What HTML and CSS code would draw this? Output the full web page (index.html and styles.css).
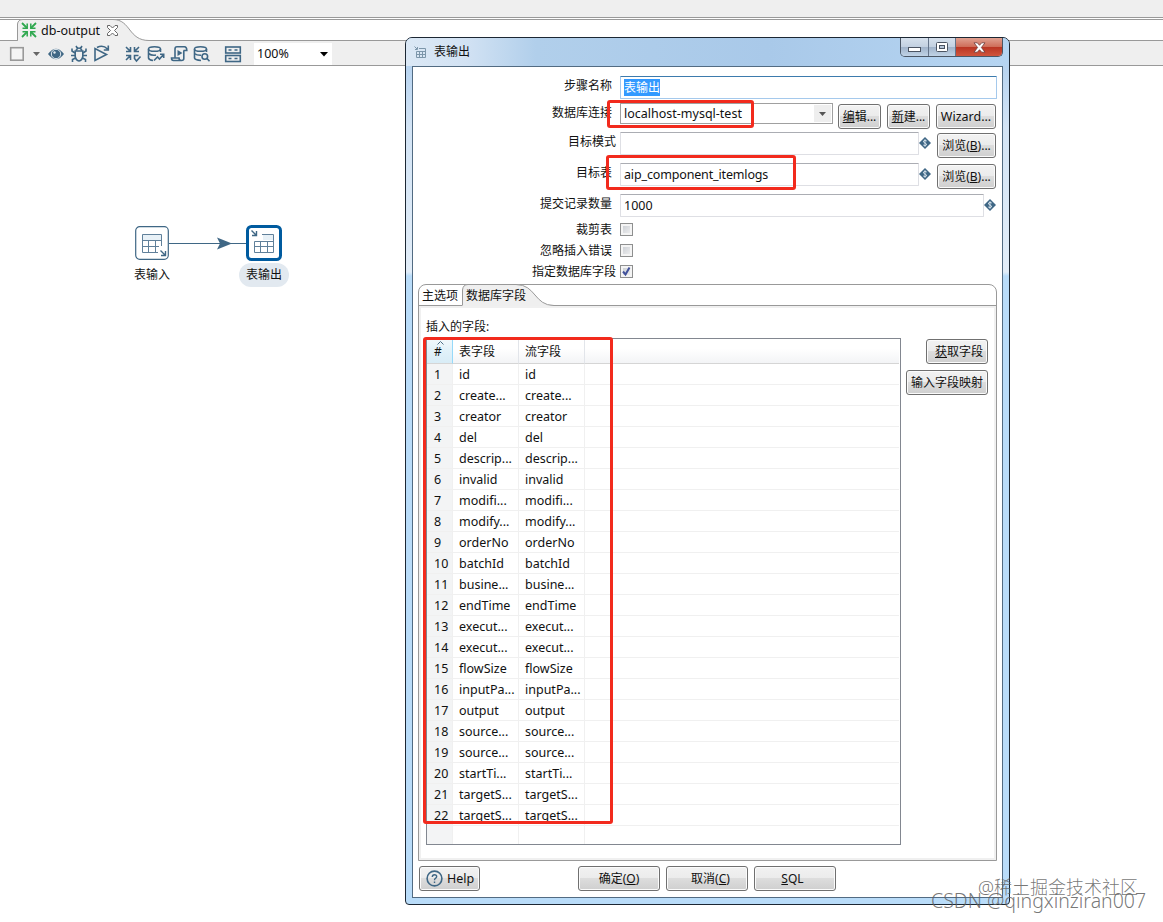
FILE: index.html
```
<!DOCTYPE html>
<html lang="zh-CN">
<head>
    <meta charset="UTF-8">
    <title>db-output</title>
    <link rel="stylesheet" href="styles.css">
</head>
<body>
    <div class="menu-strip"></div>
    <div class="tab-strip">
        <svg class="tab-shape" width="160" height="22" viewBox="0 0 160 22">
            <path d="M17.500 22 V5 Q18 .5 23 .5 H113 C131 .5 128 21.500 149 21.500 V22 Z" fill="#efefef"/>
            <path d="M0 21.500 H17.500 V5 Q18 .5 23 .5 H113 C131 .5 128 21.500 149 21.500 H160" fill="none" stroke="#999"/>
        </svg>
        <div class="tab-title">
            <svg width="16" height="16" viewBox="0 0 16 16" fill="none" stroke="#2fa84f" stroke-width="1.800">
                <path d="M1 1 L6 6 M15 1 L10 6 M1 15 L6 10 M15 15 L10 10"/>
                <path d="M1.500 6.200 H6.200 V1.500 M14.500 6.200 H9.800 V1.500 M1.500 9.800 H6.200 V14.500 M14.500 9.800 H9.800 V14.500" stroke-width="1.500"/>
            </svg>
            <span>db-output</span>
            <svg class="tab-close" width="11" height="11" viewBox="0 0 11 11" fill="#fff" stroke="#666">
                <path d="M.5 .5 H3 L5.500 3 L8 .5 H10.500 V2.500 L7.500 5.500 L10.500 8.500 V10.500 H8 L5.500 8 L3 10.500 H.5 V8.500 L3.500 5.500 L.5 2.500 Z"/>
            </svg>
        </div>
    </div>
    <div class="toolbar">
        <svg class="tools" width="250" height="24" viewBox="0 0 250 24" fill="none" stroke="#3f6785" stroke-width="1.600">
            <!-- stop + dropdown -->
            <rect x="10.700" y="6.700" width="12.500" height="12.500" stroke="#999" fill="#f4f4f4"/>
            <path d="M33 11 H40 L36.500 15 Z" fill="#666" stroke="none"/>
            <!-- preview -->
            <path d="M48 13 Q56 2.500 64 13 Q56 23.500 48 13 Z" fill="#3f6785" stroke="none"/>
            <circle cx="56" cy="13" r="4.700" fill="#3f6785" stroke="#e4ebf0" stroke-width="1"/>
            <circle cx="54.500" cy="11.500" r="1.200" fill="#dfe8ee" stroke="none"/>
            <!-- debug -->
            <path d="M75.200 10 H82.800 V15.500 Q82 19.500 79 20 Q76 19.500 75.200 15.500 Z"/>
            <path d="M76 9.500 Q79 4.500 82 9.500 M76 5 L77.500 7.500 M82 5 L80.500 7.500 M75 12 L72 10 V7.500 M83 12 L86 10 V7.500 M75 14.500 H71 M83 14.500 H87 M75.500 17 L72.500 18.500 V21 M82.500 17 L85.500 18.500 V21"/>
            <!-- replay -->
            <path d="M95 7.500 V19.500 L106.500 13.500 Z"/>
            <path d="M97 6.500 Q103 3.500 107.500 8 M108.300 4.500 V9 H103.800"/>
            <!-- verify -->
            <path d="M126 6 L130.500 10.500 M139 6 L134.500 10.500 M126 19 L130.500 14.500 M126 10.500 H130.500 V6 M139 10.500 H134.500 V6 M126 14.500 H130.500 V19 M134.500 18 V14.500 H138.500 M134.500 17.500 L136.500 20 L140.500 15.500"/>
            <!-- impact -->
            <ellipse cx="154.500" cy="8" rx="6" ry="2.300"/>
            <path d="M148.500 8 V17 Q149 19 153 19.500 M160.500 8 V11 M148.500 12.500 Q152 15 156 14 M154 19.500 L157.500 16 L159.500 18 L163.500 13.500 M160 13.200 H163.700 V17"/>
            <!-- sql script -->
            <path d="M175 16.500 V8 Q175 5.800 177 5.800 H184.500 Q186.800 5.800 186.800 9.500 H183.500 M183.800 9.500 V17.500 Q183.800 19.500 181.500 19.500 H173.500 Q171.500 19.500 171.500 17 H179 Q179 19.500 181.500 19.500"/>
            <path d="M177.500 9 L182.500 12 L177.500 15 Z" fill="#3f6785" stroke="none"/>
            <!-- explore db -->
            <ellipse cx="200.500" cy="8" rx="6" ry="2.300"/>
            <path d="M194.500 8 V17 Q195 19 201 19.500 M206.500 8 V11 M194.500 12.500 Q197 14.500 201 14.300"/>
            <circle cx="204.800" cy="15.500" r="2.800"/>
            <path d="M207 17.500 L209.500 20.200"/>
            <!-- results pane -->
            <rect x="225.700" y="6" width="14.600" height="6"/>
            <rect x="225.700" y="14.500" width="14.600" height="6"/>
            <path d="M228.500 9 H231.500 M234.500 9 H237.500 M228.500 17.500 H231.500 M234.500 17.500 H237.500"/>
        </svg>
        <div class="zoom-box">
            <span>100%</span>
            <svg width="8" height="5" viewBox="0 0 8 5"><path d="M0 0 H8 L4 4.500 Z"/></svg>
        </div>
    </div>

    <div class="canvas">
        <svg class="hop" width="78" height="14" viewBox="0 0 78 14">
            <path d="M0 7.500 H78" stroke="#3f6785"/>
            <path d="M48 1.500 L63 7.500 L48 13.500 L51 7.500 Z" fill="#3f6785"/>
        </svg>
        <div class="step step-input">
            <svg width="34" height="34" viewBox="0 0 34 34" fill="none">
                <rect x=".7" y=".7" width="32.600" height="32.600" rx="4" fill="#fff" stroke="#3f6785" stroke-width="1.200"/>
                <path d="M8 9 H26 V14 H8 Z" fill="#e8f1f7"/>
                <path d="M23 26.500 H7.500 V8.500 H26.500 V20 M7.500 14.500 H26.500 M7.500 20.500 H24 M13.500 14.500 V26.500 M20.500 14.500 V26.500" stroke="#60809a"/>
                <path d="M25.500 24.500 L30 29 M30.500 25 V29.500 H26" stroke="#3f6785" stroke-width="1.400"/>
            </svg>
            <span class="step-name">表输入</span>
        </div>
        <div class="step step-output">
            <svg width="36" height="36" viewBox="0 0 36 36" fill="none">
                <rect x="1.500" y="1.500" width="33" height="33" rx="4" fill="#fff" stroke="#005b9f" stroke-width="3"/>
                <path d="M17 10 H27 V15 H17 Z" fill="#e8f1f7"/>
                <path d="M16 9.500 H27.500 V27.500 H8.500 V16.500 H27.500 M8.500 21.500 H27.500 M14.500 16.500 V27.500 M21.500 16.500 V27.500" stroke="#60809a"/>
                <path d="M5.500 5.500 L10 10 M10.500 6 V10.500 H6" stroke="#3f6785" stroke-width="1.400"/>
            </svg>
            <span class="step-name selected">表输出</span>
        </div>
    </div>

    <div class="dialog">
        <div class="title-bar">
            <svg width="13" height="13" viewBox="0 0 13 13" fill="none" stroke="#7c96aa">
                <path d="M5 2.500 H11.500 V11.500 H2.500 V5.500 H11.500 M2.500 8.500 H11.500 M5.500 5.500 V11.500 M8.500 5.500 V11.500"/>
                <path d="M.5 .5 L3 3 M3.500 1 V3.500 H1"/>
            </svg>
            <span class="title">表输出</span>
            <div class="window-buttons">
                <div class="win-btn win-min">
                    <svg width="13" height="5" viewBox="0 0 13 5"><rect x=".5" y=".5" width="12" height="4" fill="#fff" stroke="#4b5462"/></svg>
                </div>
                <div class="win-btn win-max">
                    <svg width="12" height="10" viewBox="0 0 12 10"><rect x=".5" y=".5" width="11" height="9" rx="1" fill="#fff" stroke="#4b5462"/><rect x="3.500" y="3.500" width="5" height="3" fill="#b7c6d8" stroke="#4b5462"/></svg>
                </div>
                <div class="win-btn win-close">
                    <svg width="13" height="11" viewBox="0 0 13 11"><path d="M1 .8 H4.300 L6.500 3.300 L8.700 .8 H12 L8.400 5.500 L12 10.200 H8.700 L6.500 7.700 L4.300 10.200 H1 L4.600 5.500 Z" fill="#fff" stroke="#6b3a3a" stroke-width=".8"/></svg>
                </div>
            </div>
        </div>

        <div class="dialog-body">
            <div class="form">
                <div class="row row-name">
                    <label>步骤名称</label>
                    <div class="field focused"><span class="selection">表输出</span></div>
                </div>
                <div class="row row-connection">
                    <label>数据库连接</label>
                    <div class="combo">
                        <span>localhost-mysql-test</span>
                        <div class="combo-arrow"><svg width="7" height="4" viewBox="0 0 7 4"><path d="M0 0 H7 L3.500 4 Z" fill="#555"/></svg></div>
                    </div>
                    <div class="btn btn-small"><u>编</u>辑...</div>
                    <div class="btn btn-small"><u>新</u>建...</div>
                    <div class="btn btn-wizard">Wizard...</div>
                </div>
                <div class="row row-target">
                    <label class="wide">目标模式</label>
                    <div class="field"></div>
                    <svg class="var" width="12" height="12" viewBox="0 0 12 12"><path d="M6 0 L12 6 L6 12 L0 6 Z" fill="#3f6785"/><path d="M7.800 4 Q6 2.800 4.500 4 Q4.200 5.500 6 6 Q7.800 6.500 7.500 8 Q6 9.200 4.200 8 M6 2.200 V9.800" fill="none" stroke="#dce8f0" stroke-width=".9"/></svg>
                    <div class="btn btn-browse">浏览(<u>B</u>)...</div>
                </div>
                <div class="row row-target">
                    <label>目标表</label>
                    <div class="field table-name">aip_component_itemlogs</div>
                    <svg class="var" width="12" height="12" viewBox="0 0 12 12"><path d="M6 0 L12 6 L6 12 L0 6 Z" fill="#3f6785"/><path d="M7.800 4 Q6 2.800 4.500 4 Q4.200 5.500 6 6 Q7.800 6.500 7.500 8 Q6 9.200 4.200 8 M6 2.200 V9.800" fill="none" stroke="#dce8f0" stroke-width=".9"/></svg>
                    <div class="btn btn-browse">浏览(<u>B</u>)...</div>
                </div>
                <div class="row row-commit">
                    <label>提交记录数量</label>
                    <div class="field">1000</div>
                    <svg class="var" width="12" height="12" viewBox="0 0 12 12"><path d="M6 0 L12 6 L6 12 L0 6 Z" fill="#3f6785"/><path d="M7.800 4 Q6 2.800 4.500 4 Q4.200 5.500 6 6 Q7.800 6.500 7.500 8 Q6 9.200 4.200 8 M6 2.200 V9.800" fill="none" stroke="#dce8f0" stroke-width=".9"/></svg>
                </div>
                <div class="row row-check">
                    <label>裁剪表</label>
                    <div class="check"></div>
                </div>
                <div class="row row-check">
                    <label>忽略插入错误</label>
                    <div class="check"></div>
                </div>
                <div class="row row-check">
                    <label class="wide">指定数据库字段</label>
                    <div class="check"><svg width="11" height="11" viewBox="0 0 11 11"><path d="M2 5.500 L4.500 8.500 L8.500 1.500" fill="none" stroke="#41519b" stroke-width="2"/></svg></div>
                </div>
            </div>

            <div class="folder">
                <div class="folder-tabs">
                    <svg class="folder-shape" width="140" height="22" viewBox="0 0 140 22">
                        <path d="M44.500 22 V6 Q45 .5 50 .5 H98 C118 .5 116 21.500 136 21.500 V22 Z" fill="#efefef"/>
                        <path d="M44.500 21 V6 Q45 .5 50 .5 H98 C118 .5 116 21.500 136 21.500 H140" fill="none" stroke="#999"/>
                    </svg>
                    <span class="folder-tab">主选项</span>
                    <span class="folder-tab">数据库字段</span>
                </div>
                <div class="folder-body">
                    <div class="caption">插入的字段:</div>
                    <div class="fields">
                        <div class="grid-box">
                            <table>
                                <thead>
                                    <tr><th class="num"><svg class="sort" width="7" height="4" viewBox="0 0 7 4"><path d="M.5 3.500 L3.500 .5 L6.500 3.500" fill="none" stroke="#4e6f86"/></svg>#</th><th class="name">表字段</th><th class="name">流字段</th><th></th></tr>
                                </thead>
                                <tbody>
                                    <tr><td>1</td><td>id</td><td>id</td><td></td></tr>
                                    <tr><td>2</td><td>create...</td><td>create...</td><td></td></tr>
                                    <tr><td>3</td><td>creator</td><td>creator</td><td></td></tr>
                                    <tr><td>4</td><td>del</td><td>del</td><td></td></tr>
                                    <tr><td>5</td><td>descrip...</td><td>descrip...</td><td></td></tr>
                                    <tr><td>6</td><td>invalid</td><td>invalid</td><td></td></tr>
                                    <tr><td>7</td><td>modifi...</td><td>modifi...</td><td></td></tr>
                                    <tr><td>8</td><td>modify...</td><td>modify...</td><td></td></tr>
                                    <tr><td>9</td><td>orderNo</td><td>orderNo</td><td></td></tr>
                                    <tr><td>10</td><td>batchId</td><td>batchId</td><td></td></tr>
                                    <tr><td>11</td><td>busine...</td><td>busine...</td><td></td></tr>
                                    <tr><td>12</td><td>endTime</td><td>endTime</td><td></td></tr>
                                    <tr><td>13</td><td>execut...</td><td>execut...</td><td></td></tr>
                                    <tr><td>14</td><td>execut...</td><td>execut...</td><td></td></tr>
                                    <tr><td>15</td><td>flowSize</td><td>flowSize</td><td></td></tr>
                                    <tr><td>16</td><td>inputPa...</td><td>inputPa...</td><td></td></tr>
                                    <tr><td>17</td><td>output</td><td>output</td><td></td></tr>
                                    <tr><td>18</td><td>source...</td><td>source...</td><td></td></tr>
                                    <tr><td>19</td><td>source...</td><td>source...</td><td></td></tr>
                                    <tr><td>20</td><td>startTi...</td><td>startTi...</td><td></td></tr>
                                    <tr><td>21</td><td>targetS...</td><td>targetS...</td><td></td></tr>
                                    <tr><td>22</td><td>targetS...</td><td>targetS...</td><td></td></tr>
                                    <tr><td></td><td></td><td></td><td></td></tr>
                                </tbody>
                            </table>
                        </div>
                        <div class="side-buttons">
                            <div class="btn btn-get"><u>获</u>取字段</div>
                            <div class="btn btn-map">输入字段映射</div>
                        </div>
                    </div>
                </div>
            </div>

            <div class="footer">
                <div class="btn btn-help">
                    <svg width="17" height="17" viewBox="0 0 17 17" fill="none" stroke="#3f6785" stroke-width="1.600"><circle cx="8.500" cy="8.500" r="7.400"/><path d="M6.300 7 Q6.300 4.700 8.500 4.700 Q10.700 4.700 10.700 6.600 Q10.700 7.600 9.500 8.300 Q8.500 9 8.500 10.200 M8.500 11.500 V13" stroke-width="1.400"/></svg>
                    <span>Help</span>
                </div>
                <div class="btn btn-action">确定(<u>O</u>)</div>
                <div class="btn btn-action cancel">取消(<u>C</u>)</div>
                <div class="btn btn-action sql"><u>S</u>QL</div>
            </div>
        </div>
    </div>

    <!-- highlight boxes -->
    <div class="mark mark-connection"></div>
    <div class="mark mark-table"></div>
    <div class="mark mark-fields"></div>

    <div class="watermark watermark-top">@稀土掘金技术社区</div>
    <div class="watermark watermark-bottom">CSDN @qingxinziran007</div>
</body>
</html>
```
FILE: styles.css
```
* {
    box-sizing: border-box;
}

body {
    margin: 0;
    height: 922px;
    position: relative;
    overflow: hidden;
    background-color: #fff;
    color: #111;
    font-family: "Noto Sans", "Noto Sans CJK SC", sans-serif;
    font-size: 12px;
    line-height: 18px;
    white-space: nowrap;
}

svg {
    display: block;
    flex: none;
}

/* editor */
.menu-strip {
    height: 18px;
    background-color: #efefef;
    border-bottom: 1px solid #999;
}

.tab-strip {
    height: 22px;
    position: relative;
    margin-top: 1px;
    border-top: 1px solid #999;
    border-bottom: 1px solid #999;
}

.tab-shape {
    position: absolute;
    left: 0;
    top: -1px;
}

.tab-title {
    position: relative;
    display: flex;
    align-items: center;
    height: 20px;
    padding-left: 21px;
    font-size: 12.5px;
}

.tab-title span {
    margin: 0 7px 0 4px;
    padding-top: 2px;
}

.toolbar {
    display: flex;
    height: 25px;
    background-color: #efefef;
    border-bottom: 1px solid #999;
}

.zoom-box {
    display: flex;
    align-items: center;
    justify-content: space-between;
    width: 78px;
    height: 22px;
    margin: 2px 0 0 4px;
    padding: 0 4px 0 3px;
    background-color: #fff;
    font-size: 12.5px;
}

.hop {
    position: absolute;
    left: 169px;
    top: 236px;
}

.step {
    position: absolute;
    display: flex;
    flex-direction: column;
    align-items: center;
    width: 50px;
}

.step-input {
    left: 127px;
    top: 226px;
}

.step-output {
    left: 239px;
    top: 225px;
}

.step-name {
    height: 24px;
    margin-top: 3px;
    padding: 0 7px;
    line-height: 24px;
}

.step-name.selected {
    margin-top: 2px;
    border-radius: 12px;
    background-color: #e2e9f0;
}

/* dialog window */
.dialog {
    position: absolute;
    left: 405px;
    top: 37px;
    width: 605px;
    height: 868px;
    padding: 0 6px 6px;
    border: 1px solid #1c2733;
    border-radius: 7px 7px 4px 4px;
    background: linear-gradient(to bottom, #b0cde9 0, #b8d4f0 30px, #d3e4f5 90px, #e2edf8 234px, #b9dcf9 238px, #b9dcf9 100%);
}

.title-bar {
    display: flex;
    align-items: center;
    height: 28px;
    margin: 0 -6px;
    padding: 0 6px 0 8px;
    border-radius: 6px 6px 0 0;
    background: linear-gradient(to right, #dbe8f5 0, #d2e2f3 60px, #b1cfeb 130px, #a9c9e9 60%, #b6d5f2 100%);
}

.title {
    margin-left: 7px;
}

.window-buttons {
    display: flex;
    align-self: flex-start;
    width: 103px;
    height: 19px;
    margin-left: auto;
    border: 1px solid #4a5665;
    border-top: 0;
    border-radius: 0 0 5px 5px;
    overflow: hidden;
}

.win-btn {
    display: flex;
    align-items: center;
    justify-content: center;
    border-right: 1px solid #64748a;
    background: linear-gradient(#d6e1ed 0, #c3d1e1 48%, #9fb2c9 50%, #c0d3e6 100%);
}

.win-min {
    width: 28px;
    padding-top: 4px;
}

.win-max {
    width: 27px;
}

.win-close {
    flex: 1;
    border-right: 0;
    background: linear-gradient(#e0a191 0, #cf6e5a 48%, #b93422 50%, #d0553d 100%);
}

.dialog-body {
    height: 832px;
    border: 1px solid #526b82;
    background-color: #fff;
}

.form {
    height: 218px;
    padding-top: 9px;
}

.row {
    display: flex;
    align-items: flex-start;
}

.row label {
    width: 207px;
    padding: 1px 8px 0 0;
    text-align: right;
}

.row label.wide {
    padding-right: 4px;
}

.row-name {
    height: 27px;
}

.row-connection {
    height: 29px;
}

.row-target {
    height: 31px;
}

.row-commit {
    height: 28px;
}

.row-check {
    height: 21px;
    line-height: 15px;
}

.row-check label {
    padding-top: 0;
}

.field {
    width: 299px;
    height: 23px;
    padding: 0 3px;
    border: 1px solid #dedfe4;
    border-top-color: #abadb3;
    border-radius: 1px;
    font-size: 12.5px;
    line-height: 21px;
}

.table-name {
    letter-spacing: -0.15px;
}

.row-commit .field {
    width: 364px;
}

.row .focused {
    width: 377px;
    padding-top: 2px;
    border-color: #a5c9ec;
    border-top-color: #3d7bad;
    font-size: 12px;
    line-height: 17px;
}

.selection {
    display: inline-block;
    background-color: #3399ff;
    color: #fff;
}

.combo {
    display: flex;
    justify-content: space-between;
    width: 213px;
    height: 21px;
    padding: 1px 1px 1px 3px;
    border: 1px solid #a0a0a0;
    font-size: 12.5px;
    line-height: 17px;
}

.combo-arrow {
    display: flex;
    align-items: center;
    justify-content: center;
    width: 17px;
    background-color: #eee;
}

.btn {
    height: 25px;
    border: 1px solid #707070;
    border-radius: 3px;
    box-shadow: inset 0 0 0 1px #fbfbfb;
    background: linear-gradient(#f2f2f2 0, #ebebeb 50%, #dddddd 50%, #cfcfcf 100%);
    line-height: 23px;
    text-align: center;
}

.row .btn {
    margin-top: 1px;
}

.btn-small {
    width: 43px;
    margin-left: 5px;
}

.btn-small + .btn-small {
    margin-left: 6px;
}

.btn-wizard {
    width: 60px;
    margin-left: 6px;
    font-size: 12.5px;
}

.var {
    margin-top: 5px;
}

.btn-browse {
    width: 59px;
    margin-left: 6px;
}

.check {
    width: 13px;
    height: 13px;
    margin-top: 1px;
    border: 1px solid #8e8f8f;
    box-shadow: inset 0 0 0 2px #f4f4f4;
    background: linear-gradient(135deg, #c5c9cf, #f4f4f4);
}

/* tab folder */
.folder {
    display: flex;
    flex-direction: column;
    width: 579px;
    height: 577px;
    margin: -1px 0 0 5px;
    border: 1px solid #999;
    border-radius: 8px 8px 0 0;
}

.folder-tabs {
    position: relative;
    display: flex;
    height: 21px;
    padding-left: 3px;
    border-bottom: 1px solid #999;
}

.folder-shape {
    position: absolute;
    left: -1px;
    top: -1px;
}

.folder-tab {
    position: relative;
    margin-right: 8px;
    line-height: 22px;
}

.folder-body {
    flex: 1;
    padding: 9px 6px 0 5px;
    border: 2px solid #f0f0f0;
}

.caption {
    height: 21px;
    line-height: 19px;
}

.fields {
    display: flex;
    justify-content: space-between;
}

.grid-box {
    width: 475px;
    height: 507px;
    padding-right: 1px;
    overflow: hidden;
    border: 1px solid #828790;
}

table {
    width: 100%;
    table-layout: fixed;
    border-collapse: separate;
    border-spacing: 0;
    font-size: 12.5px;
}

th {
    height: 25px;
    padding: 2px 0 0 6px;
    border-right: 1px solid #e2e5ea;
    border-bottom: 1px solid #d5d5d5;
    background: linear-gradient(#fff 40%, #f3f4f6 100%);
    font-size: 12px;
    font-weight: normal;
    line-height: 18px;
    text-align: left;
}

th.num {
    position: relative;
    width: 26px;
    padding-left: 7px;
    border-right-color: #96d9f9;
    background: linear-gradient(#f2f9fc 0, #e1f1f9 50%, #d8ecf6 100%);
}

th.name {
    width: 66px;
}

.sort {
    position: absolute;
    left: 10px;
    top: 2px;
}

th:last-child,
td:last-child {
    border-right: 0;
}

td {
    height: 21px;
    padding: 2px 0 0 6px;
    border-right: 1px solid #f0f0f0;
    border-bottom: 1px solid #f0f0f0;
    line-height: 18px;
}

td:first-child {
    padding-left: 7px;
    background-color: #f3f4f5;
}

.side-buttons {
    display: flex;
    flex-direction: column;
    align-items: flex-end;
    gap: 6px;
    padding-top: 1px;
}

.btn-get {
    width: 62px;
    padding-left: 4px;
}

.btn-map {
    width: 82px;
}

.footer {
    display: flex;
    padding: 5px 0 0 6px;
}

.btn-help {
    display: flex;
    align-items: center;
    gap: 4px;
    width: 61px;
    margin-right: 92px;
    padding-left: 6px;
    font-size: 12.5px;
}

.btn-action {
    width: 82px;
    margin-left: 6px;
}

.btn-action.cancel {
    padding-left: 7px;
}

.btn-action.sql {
    padding-right: 5px;
}

/* red marks over the dialog */
.mark {
    position: absolute;
    border: 3px solid #f22a1d;
    border-radius: 3px;
}

.mark-connection {
    left: 607px;
    top: 100px;
    width: 147px;
    height: 28px;
}

.mark-table {
    left: 606px;
    top: 155px;
    width: 190px;
    height: 35px;
}

.mark-fields {
    left: 423px;
    top: 337px;
    width: 190px;
    height: 487px;
}

.watermark {
    position: absolute;
    color: rgba(95, 95, 95, 0.85);
    font-size: 18px;
    font-weight: 300;
    line-height: 24px;
}

.watermark-top {
    left: 978px;
    top: 875px;
}

.watermark-bottom {
    left: 931px;
    top: 889px;
    font-size: 19.5px;
}
```
